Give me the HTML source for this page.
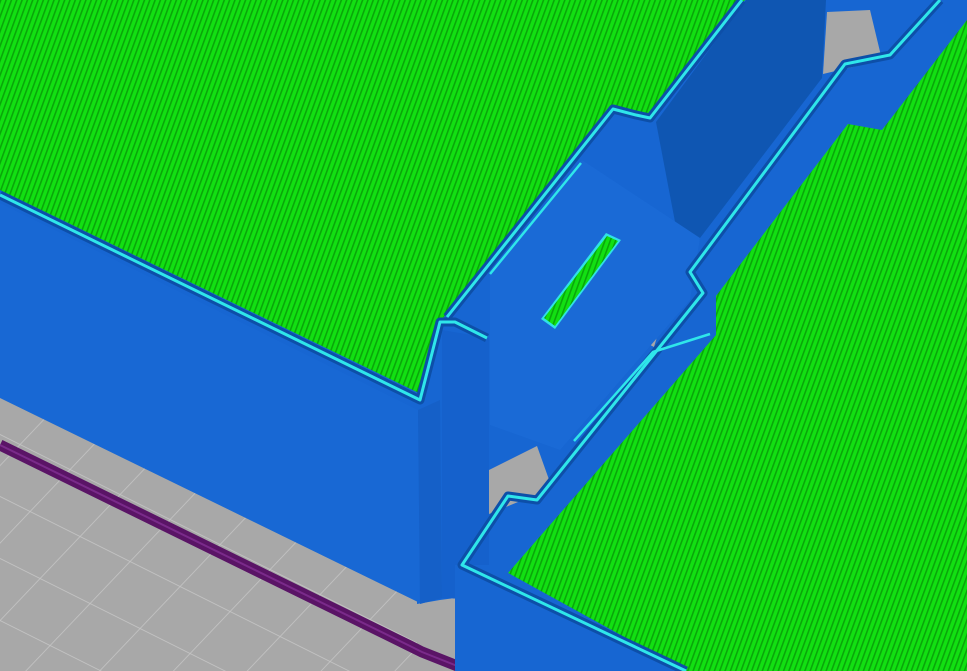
<!DOCTYPE html>
<html><head><meta charset="utf-8"><style>html,body{margin:0;padding:0;background:#a9a9a9;overflow:hidden}svg{display:block}</style></head>
<body>
<svg width="967" height="671" viewBox="0 0 967 671" xmlns="http://www.w3.org/2000/svg">
<defs>
<pattern id="g" patternUnits="userSpaceOnUse" width="5" height="5" patternTransform="rotate(20)">
<rect width="5" height="5" fill="#12e012"/><rect width="1.6" height="5" fill="#0aa60a"/>
</pattern>
<pattern id="grid" patternUnits="userSpaceOnUse" width="1" height="1" patternTransform="matrix(50,25,-40,42,0,0)">
<rect width="1" height="1" fill="#a8a8a8"/>
<path d="M0 0H1M0 0V1" stroke="#c4c4c4" stroke-width="0.03" fill="none"/>
</pattern>
</defs>
<rect width="967" height="671" fill="url(#grid)"/>
<polygon points="417,604 440,600 440,671 417,671" fill="#a8a8a8"/>
<polygon points="435,604 455,598 455,671 435,671" fill="#a8a8a8"/>
<path d="M0 445 L410 646 L422 652 L470 671" stroke="#5a1466" stroke-width="11" fill="none"/>
<path d="M0 445 L410 646 L422 652 L470 671" stroke="#7a2a8a" stroke-width="2" fill="none"/>
<polygon points="740,0 967,0 967,28 892,138 852,130 722,300 722,334 516,573 700,671 455,671 455,598 440,600 417,604 417,410 425,398 443,318 612,106 650,114" fill="#1766d2"/>
<polygon points="0,0 745,0 650,114 612,106 443,318 425,398 0,193" fill="url(#g)"/>
<polygon points="967,20 967,671 686,671 508,573 716,335 716,296 848,124 882,130" fill="url(#g)"/>
<polygon points="656,122 746,0 826,0 822,78 700,238 688,290" fill="#0f56b2"/>
<polygon points="827,12 870,10 882,60 823,74" fill="#a8a8a8"/>
<polygon points="640,318 632,335 654,347 668,300" fill="#a8a8a8"/>
<polygon points="489,470 537,446 552,488 489,514" fill="#a8a8a8"/>
<polygon points="0,190 425,396 418,412 0,205" fill="#1766d2"/>
<polygon points="0,203 418,410 420,603 0,398" fill="#1868d4"/>
<polygon points="418,410 440,400 442,598 420,604" fill="#1560c8"/>
<polygon points="442,330 489,338 489,600 442,598" fill="#1561cc"/>
<polygon points="455,565 512,565 508,573 686,671 455,671" fill="#1766d2"/>
<polygon points="490,274 582,160 700,238 690,300 560,450 490,425" fill="#1a6ad6"/>
<polygon points="541,319 606,233 621,240 555,329" fill="#2fe2e6"/>
<polygon points="544,318 607,236 618,241 555,326" fill="url(#g)"/>
<g fill="none" stroke-linejoin="round">
<path d="M0 195 L420 400 L440 322 L455 322 L487 338 M447 317 L613 109 L636 115 L650 118 L742 0" stroke="#0d4fa8" stroke-width="9"/>
<path d="M0 195 L420 400 L440 322 L455 322 L487 338 M447 317 L613 109 L636 115 L650 118 L742 0" stroke="#2fe6ea" stroke-width="3"/>
<path d="M940 0 L890 55 L845 64 L690 272 L703 293 L537 500 L508 496 L462 565 L686 671" stroke="#0d4fa8" stroke-width="9"/>
<path d="M940 0 L890 55 L845 64 L690 272 L703 293 L537 500 L508 496 L462 565 L686 671" stroke="#2fe6ea" stroke-width="3"/>
<path d="M490 274 L581 163 M710 334 L653 352 L574 441" stroke="#2fe6ea" stroke-width="2.5"/>
</g>
</svg>
</body></html>
